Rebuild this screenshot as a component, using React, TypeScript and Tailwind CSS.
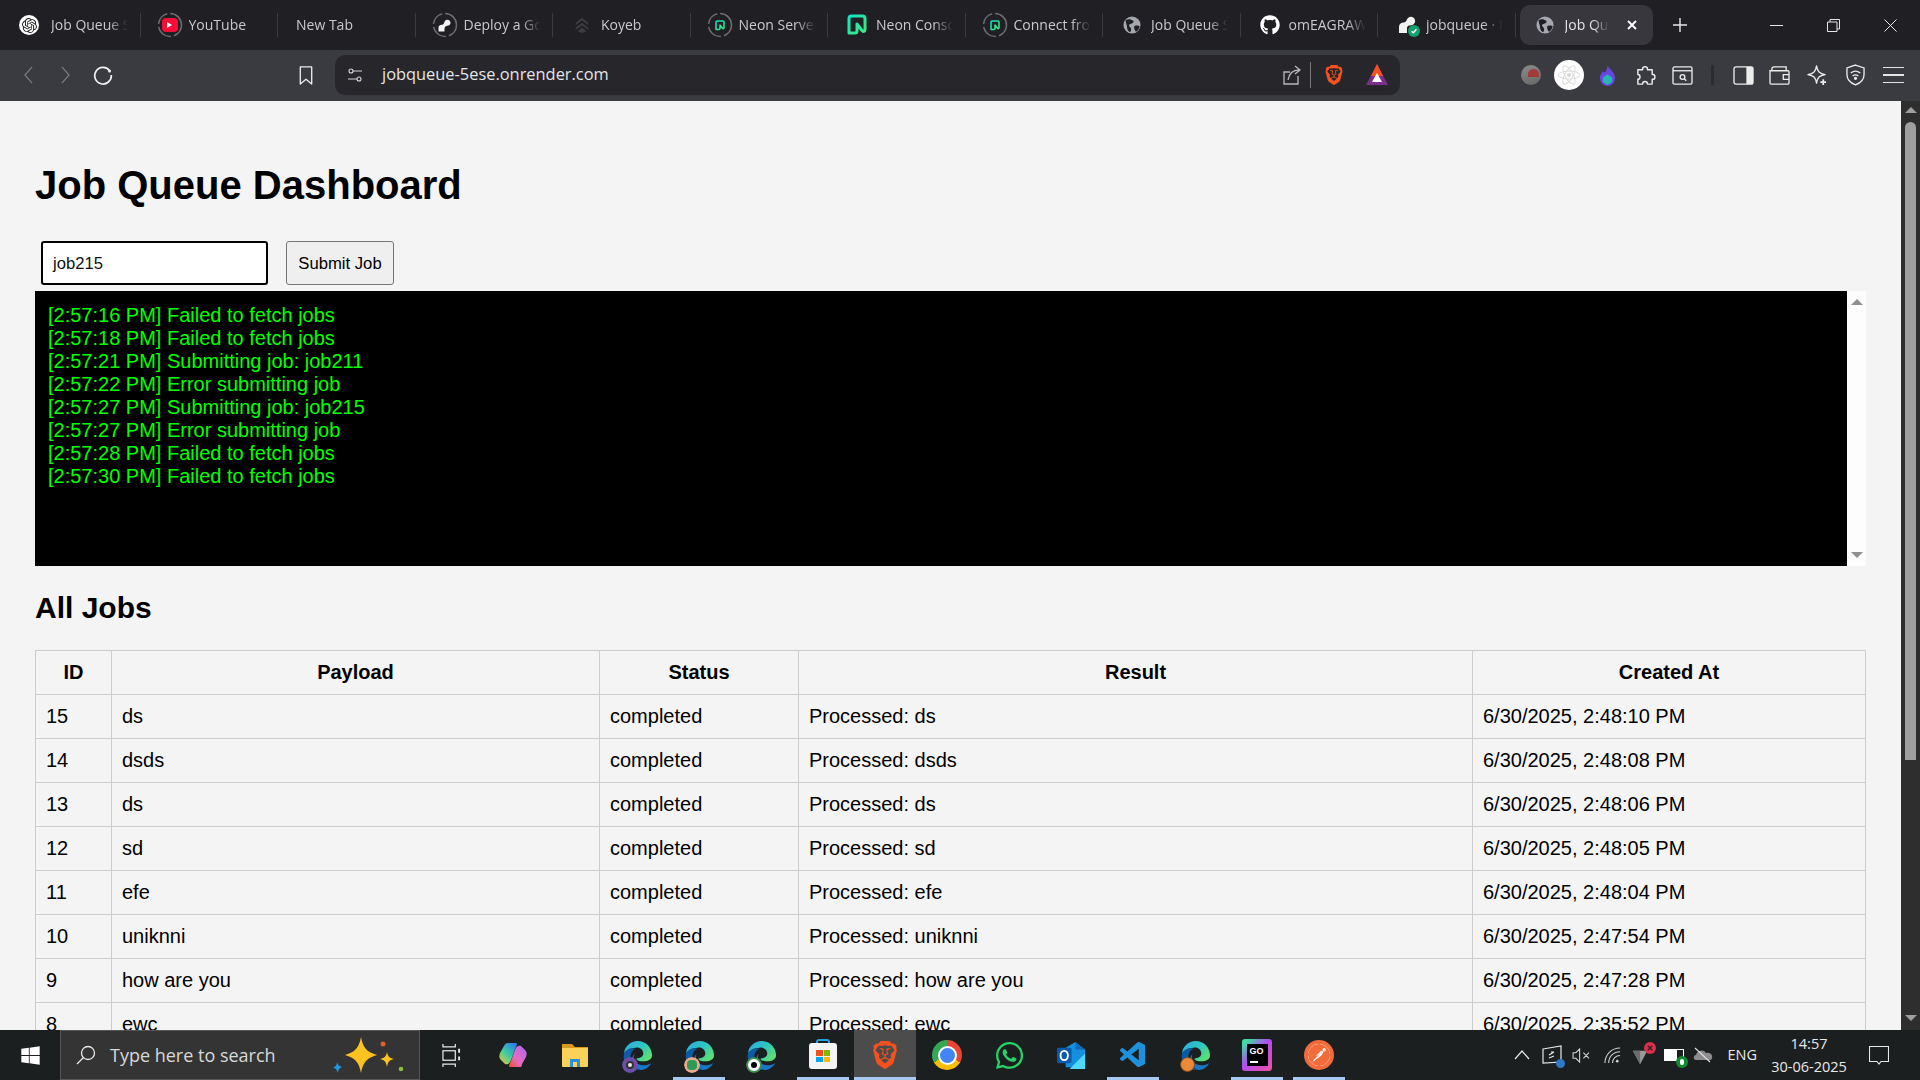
import type { ReactNode } from "react";
import { FaGithub, FaReact, FaWhatsapp, FaWindows } from "react-icons/fa";
import { SiBrave, SiOpenai, SiPostman } from "react-icons/si";
import { VscVscode } from "react-icons/vsc";

const UI_FONT = "font-['Open_Sans','Noto_Sans',sans-serif]";

/* Dashed ring browsers show round a favicon while loading */
function LoadingRing({ children }: { children: ReactNode }) {
  return (
    <div className="relative w-[26px] h-[26px] flex items-center justify-center">
      <svg viewBox="0 0 26 26" className="absolute inset-0 w-[26px] h-[26px]" fill="none">
        <circle cx="13" cy="13" r="11.5" stroke="#6b6b70" strokeWidth="1.6" strokeDasharray="14 3 17 3 14 3 19 3" />
      </svg>
      {children}
    </div>
  );
}

function NeonMark({ size = 14 }: { size?: number }) {
  return (
    <svg viewBox="0 0 20 22" width={size} height={size * 1.1} fill="none">
      <defs>
        <linearGradient id="neon" x1="0" y1="0" x2="1" y2="1">
          <stop offset="0" stopColor="#12e5c4" />
          <stop offset="1" stopColor="#3dea7c" />
        </linearGradient>
      </defs>
      <path d="M2 19V4.5A2.5 2.5 0 0 1 4.500 2H15.500A2.500 2.500 0 0 1 18 4.500V15.500C18 17.500 16 18 15 16.500L10 10V17A2 2 0 0 1 8 19H2Z" stroke="url(#neon)" strokeWidth="3" strokeLinejoin="round" />
    </svg>
  );
}

function Globe() {
  return (
    <svg viewBox="0 0 20 20" className="w-[18px] h-[18px]">
      <circle cx="10" cy="10" r="9.500" fill="#a4a8ae" />
      <path d="M3 4.500C6 3 9 3.500 11.500 5.500C12.500 6.500 11 8 9 8.500C6.500 9 6 10.500 7.500 12C9.500 13.500 9.500 16 8 18C6 17.500 4.500 15 4.500 12.500C4.500 9.500 2.500 7 3 4.500Z" fill="#202024" />
      <path d="M13 11C15 10 17.500 10.500 18.500 11.500C18 14 16.500 16.500 14.500 17.500C13 16 11.500 12 13 11Z" fill="#202024" />
    </svg>
  );
}

function RenderMark({ check }: { check?: boolean }) {
  return (
    <div className="relative w-[20px] h-[20px]">
      <svg viewBox="0 0 20 20" className="w-[20px] h-[20px]">
        <path d="M2 18V12C2 9 4 7.500 6.500 7.500C9 7.500 9.500 5 10 4.500C11 2.500 13 1.500 15 2C17.500 2.500 18.500 5 18 7C17.500 9.500 15 10.500 12.500 10.500C10.500 10.500 10 12 10 13V18Z" fill="#f2f2f2" />
      </svg>
      {check && (
        <div className="absolute right-[-3px] bottom-[-2px] w-[12px] h-[12px] rounded-full bg-[#12a06e] flex items-center justify-center">
          <svg viewBox="0 0 10 10" className="w-[8px] h-[8px]" fill="none" stroke="#fff" strokeWidth="1.800">
            <path d="M2 5.200L4.200 7.200L8 2.800" />
          </svg>
        </div>
      )}
    </div>
  );
}

const tabs: { title: string; icon: ReactNode }[] = [
  {
    title: "Job Queue Status",
    icon: (
      <div className="w-[20px] h-[20px] mr-[6px] rounded-full bg-white flex items-center justify-center">
        <SiOpenai className="w-[15px] h-[15px] text-[#222]" />
      </div>
    ),
  },
  {
    title: "YouTube",
    icon: (
      <LoadingRing>
        <div className="w-[16px] h-[14px] rounded-[4px] bg-[#f50f38] flex items-center justify-center">
          <div className="w-0 h-0 border-y-[3px] border-y-transparent border-l-[5px] border-l-white" />
        </div>
      </LoadingRing>
    ),
  },
  { title: "New Tab", icon: null },
  {
    title: "Deploy a Go service",
    icon: (
      <LoadingRing>
        <svg viewBox="0 0 20 20" className="w-[15px] h-[15px]">
          <path d="M2 18V13C2 10 4 9 6.500 9C9 9 9.500 6 10.500 4C12 2 15 1.500 17 3.500C19 6 18 9 15.500 10C13 10.500 10 11 10 14V18Z" fill="#f2f2f2" />
        </svg>
      </LoadingRing>
    ),
  },
  {
    title: "Koyeb",
    icon: (
      <svg viewBox="0 0 20 20" className="w-[18px] h-[18px]" fill="#3c3c40">
        <path d="M10 2L17 7.500V10L10 5L3 10V7.500ZM10 7.500L17 13V15.500L10 10.500L3 15.500V13ZM10 13L15 17L10 19L5 17Z" />
      </svg>
    ),
  },
  { title: "Neon Serverless", icon: <LoadingRing><NeonMark size={10} /></LoadingRing> },
  { title: "Neon Console", icon: <NeonMark size={20} /> },
  { title: "Connect from any", icon: <LoadingRing><NeonMark size={10} /></LoadingRing> },
  { title: "Job Queue Status", icon: <Globe /> },
  { title: "omEAGRAWAL/job", icon: <FaGithub className="w-[20px] h-[20px] text-white" /> },
  { title: "jobqueue · Render", icon: <RenderMark check /> },
];

const logs = [
  "[2:57:16 PM] Failed to fetch jobs",
  "[2:57:18 PM] Failed to fetch jobs",
  "[2:57:21 PM] Submitting job: job211",
  "[2:57:22 PM] Error submitting job",
  "[2:57:27 PM] Submitting job: job215",
  "[2:57:27 PM] Error submitting job",
  "[2:57:28 PM] Failed to fetch jobs",
  "[2:57:30 PM] Failed to fetch jobs",
];

const jobs = [
  [15, "ds", "6/30/2025, 2:48:10 PM"],
  [14, "dsds", "6/30/2025, 2:48:08 PM"],
  [13, "ds", "6/30/2025, 2:48:06 PM"],
  [12, "sd", "6/30/2025, 2:48:05 PM"],
  [11, "efe", "6/30/2025, 2:48:04 PM"],
  [10, "uniknni", "6/30/2025, 2:47:54 PM"],
  [9, "how are you", "6/30/2025, 2:47:28 PM"],
  [8, "ewc", "6/30/2025, 2:35:52 PM"],
  [7, "test", "6/30/2025, 2:35:40 PM"],
];

function TabStrip() {
  return (
    <div className={`h-[50px] bg-[#1f1f24] flex items-center pl-[3px] ${UI_FONT}`}>
      {tabs.map((tab, i) => (
        <div key={i} className="w-[137.5px] h-[24px] flex items-center relative border-r border-[#3a3a40] last:border-r-0">
          {tab.icon ? (
            <div className="w-[48px] flex-shrink-0 flex justify-center pl-[10px]">{tab.icon}</div>
          ) : (
            <div className="w-[18px] flex-shrink-0" />
          )}
          <span className="block w-[80px] pb-[2px] overflow-hidden whitespace-nowrap text-[14px] text-[#c9c9cd] [mask-image:linear-gradient(to_right,black_72%,transparent_96%)]">
            {tab.title}
          </span>
        </div>
      ))}
      <div className="ml-[4px] w-[133px] h-[40px] rounded-[10px] bg-[#37373d] flex items-center flex-shrink-0">
        <div className="w-[45px] flex justify-center pl-[5px]"><Globe /></div>
        <span className="block w-[46px] pb-[2px] overflow-hidden whitespace-nowrap text-[14px] text-[#e4e4e6] [mask-image:linear-gradient(to_right,black_60%,transparent_96%)]">
          Job Queue
        </span>
        <svg viewBox="0 0 10 10" className="w-[10px] h-[10px] ml-[16px]" stroke="#fff" strokeWidth="1.800">
          <path d="M1 1L9 9M9 1L1 9" />
        </svg>
      </div>
      <svg viewBox="0 0 14 14" className="w-[14px] h-[14px] ml-[20px]" stroke="#e8e8e8" strokeWidth="1.400">
        <path d="M7 0V14M0 7H14" />
      </svg>
      <div className="flex-1" />
      <div className="flex items-center">
        <div className="w-[56px] flex justify-center"><div className="w-[13px] h-px bg-[#e6e6e6]" /></div>
        <div className="w-[58px] flex justify-center">
          <svg viewBox="0 0 13 13" className="w-[13px] h-[13px]" fill="none" stroke="#e6e6e6">
            <path d="M0.500 3H10V12.500H0.500ZM3 3V0.500H12.500V10H10" />
          </svg>
        </div>
        <div className="w-[58px] pr-[2px] flex justify-center">
          <svg viewBox="0 0 13 13" className="w-[13px] h-[13px]" stroke="#e6e6e6">
            <path d="M0.500 0.500L12.500 12.500M12.500 0.500L0.500 12.500" />
          </svg>
        </div>
      </div>
    </div>
  );
}

function ToolIcon({ children, w }: { children: ReactNode; w: string }) {
  return <div className={`${w} flex justify-center items-center`}>{children}</div>;
}

function Toolbar() {
  return (
    <div className={`h-[51px] pb-px bg-[#3a3a41] flex items-center ${UI_FONT}`}>
      <div className="w-[335px] flex items-center flex-shrink-0">
        <ToolIcon w="w-[28px] ml-[14px]">
          <svg viewBox="0 0 12 20" className="w-[11px] h-[18px]" fill="none" stroke="#7c7c82" strokeWidth="1.300"><path d="M10 1L2 10L10 19" /></svg>
        </ToolIcon>
        <ToolIcon w="w-[28px] ml-[9px]">
          <svg viewBox="0 0 12 20" className="w-[11px] h-[18px]" fill="none" stroke="#7c7c82" strokeWidth="1.300"><path d="M2 1L10 10L2 19" /></svg>
        </ToolIcon>
        <ToolIcon w="w-[28px] ml-[10px]">
          <svg viewBox="0 0 20 20" className="w-[20px] h-[20px]" fill="none" stroke="#f0f0f0" strokeWidth="1.700"><path d="M16.500 5.500A8.300 8.300 0 1 0 18.300 10" /><circle cx="16.500" cy="6" r="1.500" fill="#f0f0f0" stroke="none" /></svg>
        </ToolIcon>
        <div className="flex-1" />
        <svg viewBox="0 0 14 20" className="w-[14px] h-[19px] mr-[22px]" fill="none" stroke="#ececec" strokeWidth="1.400"><path d="M1 1H13V19L7 14L1 19Z" strokeLinejoin="round" /></svg>
      </div>
      <div className="w-[1065px] h-[40px] rounded-[10px] bg-[#26262b] flex items-center flex-shrink-0">
        <svg viewBox="0 0 16 16" className="w-[16px] h-[16px] ml-[12px]" fill="none" stroke="#d8d8d8" strokeWidth="1.100">
          <circle cx="4" cy="4" r="2" /><path d="M6 4H15M1 12H10" /><circle cx="12" cy="12" r="2" />
        </svg>
        <span className="ml-[19px] pb-[1px] text-[16.4px] text-[#e4e4e8]">jobqueue-5ese.onrender.com</span>
        <div className="flex-1" />
        <svg viewBox="0 0 20 24" className="w-[20px] h-[24px]" fill="none" stroke="#b9b9bd" strokeWidth="1.300">
          <path d="M16 13V21H2V9H8M6 17C7 11 10 7 17 7M13 3L18 7L13 11" />
        </svg>
        <div className="w-px h-[26px] bg-[#77777c] ml-[8px]" />
        <SiBrave className="w-[20px] h-[24px] ml-[13px] text-[#f4511e]" />
        <svg viewBox="0 0 24 24" className="w-[24px] h-[24px] ml-[21px] mr-[11px]">
          <path d="M12 1L23 22H1Z" fill="#7b2d8b" />
          <path d="M12 1L18 13H6Z" fill="#f4511e" />
          <path d="M12 10L17 19H7Z" fill="#fff" />
        </svg>
      </div>
      <div className="flex-1 flex items-center pl-[112px]">
        <ToolIcon w="w-[38px]">
          <div className="w-[20px] h-[20px] rounded-full bg-[linear-gradient(160deg,#8c8c8c,#666)] flex items-start justify-center overflow-hidden">
            <div className="w-[11px] h-[8px] mt-[4px] ml-[4px] rounded-t-full bg-[#a33a3a]" />
          </div>
        </ToolIcon>
        <ToolIcon w="w-[38px]">
          <div className="w-[30px] h-[30px] rounded-full bg-white flex items-center justify-center">
            <FaReact className="w-[22px] h-[22px] text-[#d8d8d8]" />
          </div>
        </ToolIcon>
        <ToolIcon w="w-[38px]">
          <svg viewBox="0 0 18 22" className="w-[17px] h-[21px]">
            <path d="M9 0C10 4 17 7 17 14A8 8 0 0 1 1 14C1 10 3 9 4 6C5 8 6 8 7 7C8 5 9 3 9 0Z" fill="#6a45e0" />
            <path d="M9 10L14 13V18L9 21L4 18V13Z" fill="#25b8b0" />
          </svg>
        </ToolIcon>
        <ToolIcon w="w-[38px]">
          <svg viewBox="0 0 22 22" className="w-[21px] h-[21px]" fill="none" stroke="#ececec" strokeWidth="1.500" strokeLinejoin="round">
            <path d="M8 4C8 1 13 1 13 4V5H18V10H19C21.500 10 21.500 15 19 15H18V20H13C13 16.500 8 16.500 8 20H3V15C6 15 6 10 3 10V5H8Z" />
          </svg>
        </ToolIcon>
        <ToolIcon w="w-[36px]">
          <svg viewBox="0 0 22 20" className="w-[21px] h-[19px]" fill="none" stroke="#ececec" strokeWidth="1.400">
            <rect x="1" y="1" width="20" height="18" rx="1.500" /><path d="M1 5H21" /><circle cx="11" cy="11.500" r="2.500" /><path d="M13 13.500L15 15.500" />
          </svg>
        </ToolIcon>
        <div className="w-[3px] h-[20px] bg-[#2c2c30] ml-[11px] mr-[14px]" />
        <ToolIcon w="w-[30px]">
          <svg viewBox="0 0 22 20" className="w-[21px] h-[19px]">
            <rect x="1" y="1" width="20" height="18" rx="2" fill="none" stroke="#ececec" strokeWidth="1.400" />
            <rect x="14" y="1" width="7" height="18" fill="#ececec" />
          </svg>
        </ToolIcon>
        <ToolIcon w="w-[38px] ml-[2px]">
          <svg viewBox="0 0 22 20" className="w-[21px] h-[19px]" fill="none" stroke="#ececec" strokeWidth="1.400">
            <path d="M3 5V3C3 2 4 1 5 1H18V5M1 5H20C20.500 5 21 5.500 21 6V18C21 18.500 20.500 19 20 19H2C1.500 19 1 18.500 1 18ZM21 9H15V14H21" />
          </svg>
        </ToolIcon>
        <ToolIcon w="w-[38px]">
          <svg viewBox="0 0 22 22" className="w-[21px] h-[21px]" fill="none" stroke="#ececec" strokeWidth="1.400">
            <path d="M10 1C11 7 13 9 19 10C13 11 11 13 10 19C9 13 7 11 1 10C7 9 9 7 10 1Z" strokeLinejoin="round" /><path d="M17 15V21M14 18H20" strokeWidth="1.800" />
          </svg>
        </ToolIcon>
        <ToolIcon w="w-[38px]">
          <svg viewBox="0 0 20 23" className="w-[19px] h-[22px]" fill="none" stroke="#ececec" strokeWidth="1.400">
            <path d="M10 1L19 4V11C19 16 15 20 10 22C5 20 1 16 1 11V4Z" /><path d="M5 9.500C8 7 12 7 15 9.500M7 12.500C9 11 11 11 13 12.500" /><circle cx="10" cy="15" r="1" fill="#ececec" />
          </svg>
        </ToolIcon>
        <ToolIcon w="w-[38px]">
          <div className="w-[21px] flex flex-col gap-[6px]">
            <div className="h-[1.500px] bg-[#e4e4e4]" />
            <div className="h-[1.500px] bg-[#e4e4e4]" />
            <div className="h-[1.500px] bg-[#e4e4e4]" />
          </div>
        </ToolIcon>
      </div>
    </div>
  );
}

function ArrowUp({ color = "#8f8f8f" }: { color?: string }) {
  return <div className="w-0 h-0 border-x-[6.500px] border-x-transparent border-b-[6px]" style={{ borderBottomColor: color }} />;
}

function ArrowDown({ color = "#8f8f8f" }: { color?: string }) {
  return <div className="w-0 h-0 border-x-[6.500px] border-x-transparent border-t-[6px]" style={{ borderTopColor: color }} />;
}

function Dashboard() {
  return (
    <div className="flex-1 min-w-0 overflow-hidden pl-[35px] pr-[35px] font-['Liberation_Sans',Arial,sans-serif] text-black">
      <h1 className="mt-[61px] mb-[33px] text-[40px] leading-[46px] font-bold">Job Queue Dashboard</h1>
      <div className="flex items-stretch ml-[6px] h-[44px]">
        <div className="w-[227px] border-2 border-black rounded-[3px] bg-white flex items-center pl-[10px] text-[16.67px] text-[#111]">
          job215
        </div>
        <button className="ml-[18px] w-[108px] border border-[#767676] rounded-[3px] bg-[#efefef] text-[16.67px] text-black">
          Submit Job
        </button>
      </div>
      <div className="mt-[6px] h-[275px] flex">
        <div className="flex-1 bg-black pl-[13px] pt-[13px] text-[20px] leading-[23px] text-[#00ff00]">
          {logs.map((line, i) => (
            <div key={i}>{line}</div>
          ))}
        </div>
        <div className="w-[19px] bg-[#fdfdfd] flex flex-col items-center justify-between pt-[8px] pb-[8px]">
          <ArrowUp />
          <ArrowDown />
        </div>
      </div>
      <h2 className="mt-[25px] mb-[25px] text-[30px] leading-[34px] font-bold">All Jobs</h2>
      <table className="w-full border-collapse table-fixed text-[20px] leading-[23px]">
        <colgroup>
          <col className="w-[76px]" />
          <col className="w-[488px]" />
          <col className="w-[199px]" />
          <col className="w-[674px]" />
          <col />
        </colgroup>
        <thead>
          <tr className="h-[44px]">
            {["ID", "Payload", "Status", "Result", "Created At"].map((h) => (
              <th key={h} className="border border-[#cccccc] px-[10px] font-bold text-center">{h}</th>
            ))}
          </tr>
        </thead>
        <tbody>
          {jobs.map(([id, payload, created]) => (
            <tr key={id} className="h-[44px]">
              <td className="border border-[#cccccc] px-[10px]">{id}</td>
              <td className="border border-[#cccccc] px-[10px]">{payload}</td>
              <td className="border border-[#cccccc] px-[10px]">completed</td>
              <td className="border border-[#cccccc] px-[10px]">Processed: {payload}</td>
              <td className="border border-[#cccccc] px-[10px]">{created}</td>
            </tr>
          ))}
        </tbody>
      </table>
    </div>
  );
}

function PageScrollbar() {
  return (
    <div className="w-[19px] flex-shrink-0 bg-[#2e2e2e] flex flex-col items-center pt-[6px] pb-[9px]">
      <ArrowUp color="#9e9e9e" />
      <div className="w-[11px] h-[638px] mt-[9px] rounded-t-[6px] bg-[#a0a0a0]" />
      <div className="flex-1" />
      <ArrowDown color="#9e9e9e" />
    </div>
  );
}

function EdgeIcon({ badge }: { badge?: ReactNode }) {
  return (
    <div className="relative w-[31px] h-[31px]">
      <svg viewBox="0 0 32 32" className="w-[31px] h-[31px]">
        <defs>
          <linearGradient id="edgeA" x1="0" y1="0" x2="1" y2="0.700">
            <stop offset="0" stopColor="#2aa8e8" />
            <stop offset="0.55" stopColor="#2fc6c0" />
            <stop offset="1" stopColor="#5fe070" />
          </linearGradient>
        </defs>
        <path d="M19 31C24 31 28 28 30 24C27 26 21 27 17 25C13 23 11 19 13 14C9 18 9 28 19 31Z" fill="#1878c8" />
        <path d="M2 14C4 9 10 8 14 9C9 11 8 16 9 21C10 26 14 30 19 31C9 32 0 25 2 14Z" fill="#0c5aa8" />
        <path d="M2 14C3 6 9 1 16 1C25 1 31 8 31 16C31 20 27 22 22 22C18 22 15 21 15 19C19 19 22 17 22 14C22 10 18 7 14 8C8 8 3 11 2 14Z" fill="url(#edgeA)" />
      </svg>
      {badge && (
        <div className="absolute left-0 bottom-[-2px] w-[16px] h-[16px] rounded-full overflow-hidden flex items-center justify-center">
          {badge}
        </div>
      )}
    </div>
  );
}

const taskIcons: { icon: ReactNode; open?: boolean; active?: boolean }[] = [
  {
    icon: (
      <svg viewBox="0 0 28 26" className="w-[28px] h-[26px]">
        <defs>
          <linearGradient id="copilotA" x1="0" y1="1" x2="0.800" y2="0">
            <stop offset="0" stopColor="#f7c62f" />
            <stop offset="0.5" stopColor="#3fcfa0" />
            <stop offset="1" stopColor="#2a7ff0" />
          </linearGradient>
          <linearGradient id="copilotB" x1="1" y1="0" x2="0" y2="1">
            <stop offset="0" stopColor="#a868f0" />
            <stop offset="0.6" stopColor="#e86ac0" />
            <stop offset="1" stopColor="#f0502a" />
          </linearGradient>
        </defs>
        <path d="M22 25H12C9 25 10 23 11.500 20L16 8C17 5 19 3 22 4L26 8C28 10 28 12 27 15L23 22C22.500 24 22.500 25 22 25Z" fill="url(#copilotB)" />
        <path d="M9 1H16C19 1 18 3 16.500 6L12 18C11 21 9 23 6 22L2 18C0 16 0 14 1 11L5 4C6 2 7 1 9 1Z" fill="url(#copilotA)" />
      </svg>
    ),
  },
  {
    icon: (
      <svg viewBox="0 0 28 28" className="w-[28px] h-[28px]">
        <path d="M1 3H11L14 6H27V10H1Z" fill="#d89a1d" />
        <rect x="1" y="7" width="26" height="19" rx="1" fill="#fbd258" />
        <path d="M9 26V18H19V26H16V21H12V26Z" fill="#2a8fdc" />
      </svg>
    ),
  },
  {
    icon: (
      <EdgeIcon
        badge={
          <div className="w-[16px] h-[16px] rounded-full bg-[#6b4fa8] flex items-center justify-center">
            <div className="w-[8px] h-[8px] rounded-full bg-[#e8e8e8] border-2 border-[#333]" />
          </div>
        }
      />
    ),
  },
  {
    open: true,
    icon: (
      <EdgeIcon
        badge={
          <div className="w-[16px] h-[16px] rounded-full bg-[#e9a98c] flex items-center justify-center">
            <div className="w-[10px] h-[10px] rounded-[4px] bg-[#2f9a55]" />
          </div>
        }
      />
    ),
  },
  {
    icon: (
      <EdgeIcon
        badge={
          <div className="w-[16px] h-[16px] rounded-full bg-white border-2 border-[#3f8f50] flex items-center justify-center">
            <div className="w-[6px] h-[6px] rounded-full bg-black" />
          </div>
        }
      />
    ),
  },
  {
    open: true,
    icon: (
      <div className="relative w-[30px] h-[32px] flex justify-center">
        <div className="absolute top-0 w-[14px] h-[8px] rounded-t-[3px] border-2 border-b-0 border-[#26a0e0]" />
        <div className="absolute top-[4px] w-[28px] h-[26px] rounded-[3px] bg-[#f4f4f4] grid grid-cols-2 gap-px p-[7px]">
          <div className="bg-[#f25022]" />
          <div className="bg-[#7fba00]" />
          <div className="bg-[#00a4ef]" />
          <div className="bg-[#ffb900]" />
        </div>
      </div>
    ),
  },
  { open: true, active: true, icon: <SiBrave className="w-[28px] h-[32px] text-[#f4511e]" /> },
  {
    icon: (
      <div className="w-[30px] h-[30px] rounded-full bg-[conic-gradient(#ea4335_0deg_120deg,#fbbc05_120deg_240deg,#34a853_240deg_360deg)] flex items-center justify-center">
        <div className="w-[15px] h-[15px] rounded-full bg-[#4285f4] border-2 border-white box-content" />
      </div>
    ),
  },
  { icon: <FaWhatsapp className="w-[31px] h-[31px] text-[#25d366]" /> },
  {
    icon: (
      <svg viewBox="0 0 32 32" className="w-[31px] h-[31px]">
        <path d="M10 8L20 2L30 10V28H10Z" fill="#1490df" />
        <path d="M20 2L30 10H20Z" fill="#0f6cbd" />
        <path d="M14 30H30V14Z" fill="#50d9ff" />
        <rect x="1" y="8" width="15" height="16" rx="1.500" fill="#0a5aa8" />
        <ellipse cx="8.500" cy="16" rx="3.800" ry="4.800" fill="none" stroke="#fff" strokeWidth="2" />
      </svg>
    ),
  },
  { open: true, icon: <VscVscode className="w-[31px] h-[31px] text-[#1e90dc]" /> },
  { icon: <EdgeIcon badge={<div className="w-[15px] h-[15px] rounded-full bg-[#e88a3a] border border-[#7a4a20]" />} /> },
  {
    open: true,
    icon: (
      <div className="relative w-[30px] h-[32px] rounded-[3px] bg-[linear-gradient(135deg,#3be0a0_10%,#b04cf0_45%,#f050a0_100%)] flex items-center justify-center">
        <div className="w-[21px] h-[22px] bg-black text-[9px] leading-[10px] font-bold text-white pl-[3px] pt-[2px] font-['Liberation_Sans',sans-serif]">
          GO
          <div className="w-[8px] h-[2px] bg-white mt-[5px]" />
        </div>
      </div>
    ),
  },
  {
    open: true,
    icon: (
      <div className="w-[30px] h-[30px] rounded-full bg-[#f26b3a] flex items-center justify-center">
        <SiPostman className="w-[22px] h-[22px] text-[#f26b3a] bg-white rounded-full" />
      </div>
    ),
  },
];

function Taskbar() {
  return (
    <div className={`h-[50px] bg-[#1c1f20] flex items-stretch ${UI_FONT}`}>
      <div className="w-[60px] flex items-center justify-center flex-shrink-0">
        <FaWindows className="w-[21px] h-[21px] text-white" />
      </div>
      <div className="w-[360px] flex items-center bg-[#343434] border border-[#565656] flex-shrink-0">
        <svg viewBox="0 0 20 20" className="w-[20px] h-[20px] ml-[15px]" fill="none" stroke="#e8e8e8" strokeWidth="1.300">
          <circle cx="12" cy="8" r="6.500" /><path d="M7.500 12.500L1 19" />
        </svg>
        <span className="ml-[14px] text-[18px] text-[#d8d8d8]">Type here to search</span>
        <div className="flex-1" />
        <svg viewBox="0 0 76 40" className="w-[76px] h-[40px] mr-[12px]">
          <path d="M30 2C32 13 36 17 46 20C36 23 32 27 30 38C28 27 24 23 14 20C24 17 28 13 30 2Z" fill="#fdc21f" />
          <path d="M56 17C57 21 58 23 63 24C58 25 57 27 56 32C55 27 54 25 49 24C54 23 55 21 56 17Z" fill="#fdc21f" />
          <circle cx="52" cy="9" r="2.500" fill="#d9622a" />
          <circle cx="70" cy="34" r="2.300" fill="#8dbb3a" />
          <path d="M6 27C7 30 8 31 11 32C8 33 7 35 7 38C6 35 5 33 2 33C5 31 6 30 6 27Z" fill="#1e9be8" />
        </svg>
      </div>
      <div className="w-[62px] flex items-center justify-center flex-shrink-0">
        <svg viewBox="0 0 20 26" className="w-[19px] h-[25px]" fill="none" stroke="#e8e8e8" strokeWidth="1.300">
          <path d="M1 1V4H14V1M1 25V22H14V25" /><rect x="1" y="8" width="13" height="10" /><path d="M18 6V10M18 14V18" strokeWidth="2" />
        </svg>
      </div>
      {taskIcons.map((t, i) => (
        <div key={i} className={`w-[62px] relative flex items-center justify-center flex-shrink-0 ${t.active ? "bg-[#4c4c4c]" : ""}`}>
          {t.icon}
          {t.open && <div className={`absolute bottom-0 h-[3px] bg-[#a8c9f2] ${t.active ? "left-0 right-0" : "left-[5px] right-[5px]"}`} />}
        </div>
      ))}
      <div className="flex-1" />
      <div className="flex items-center text-white flex-shrink-0">
        <svg viewBox="0 0 16 10" className="w-[16px] h-[10px]" fill="none" stroke="#e6e6e6" strokeWidth="1.200"><path d="M1 9L8 1L15 9" /></svg>
        <div className="relative ml-[12px] w-[20px] h-[20px]">
          <svg viewBox="0 0 20 20" className="w-[20px] h-[20px]" fill="none" stroke="#e6e6e6" strokeWidth="1.200">
            <path d="M1 4L19 1V17L1 18ZM7 10L12 7M12 7H9M7 13L12 11" />
          </svg>
          <div className="absolute right-[-3px] bottom-[-3px] w-[9px] h-[9px] rounded-full bg-[#2e78c8]" />
        </div>
        <svg viewBox="0 0 20 16" className="w-[19px] h-[15px] ml-[10px]" fill="none" stroke="#d6d6d6" strokeWidth="1.100"><path d="M1 5H4L8 1V15L4 11H1ZM12 5L18 11M18 5L12 11" /></svg>
        <svg viewBox="0 0 18 18" className="w-[17px] h-[17px] ml-[13px]" fill="none" stroke="#d0d0d0" strokeWidth="1.100"><path d="M1 17C1 8 8 1 17 1M5 17C5 10 10 5 17 5M9 17C9 12.500 12.500 9 17 9" /><circle cx="14" cy="15" r="1.400" fill="#d0d0d0" stroke="none" /></svg>
        <div className="relative ml-[11px] w-[20px] h-[20px]">
          <svg viewBox="0 0 20 20" className="w-[18px] h-[18px] mt-[3px]"><path d="M1 3H17L9 18Z" fill="#9a9a9a" /><path d="M1 3H9V18Z" fill="#6c6c6c" /></svg>
          <div className="absolute right-[-4px] top-[-3px] w-[12px] h-[12px] rounded-full bg-[#d9304f] flex items-center justify-center">
            <svg viewBox="0 0 8 8" className="w-[6px] h-[6px]" stroke="#222" strokeWidth="1.500"><path d="M1 1L7 7M7 1L1 7" /></svg>
          </div>
        </div>
        <div className="relative ml-[12px] w-[20px] h-[12px] border border-white">
          <div className="w-[12px] h-full bg-white" />
          <div className="absolute right-[-5px] bottom-[-8px] w-[12px] h-[12px] rounded-full bg-[#0f8a2f] flex items-center justify-center z-10">
            <div className="w-[4px] h-[6px] rounded-full bg-white" />
          </div>
        </div>
        <svg viewBox="0 0 20 16" className="w-[20px] h-[16px] ml-[9px]"><path d="M3 13C0 13 0 8 3 8C4 3 11 2 13 6C17 5 20 8 19 11C19 13 17 13 16 13Z" fill="#8c8c8c" /><path d="M2 1L17 15" stroke="#ddd" strokeWidth="1.200" /></svg>
        <span className="ml-[14px] text-[14.500px] text-[#e8e8e8]">ENG</span>
        <div className="ml-[12px] w-[80px] flex flex-col items-center text-[14.500px] leading-[23px] text-[#e8e8e8]">
          <span>14:57</span>
          <span>30-06-2025</span>
        </div>
        <div className="ml-[20px] mr-[31px]">
          <svg viewBox="0 0 20 19" className="w-[20px] h-[19px]" fill="none" stroke="#e8e8e8" strokeWidth="1.100"><path d="M0.500 0.500H19.500V15.500H12L10 18L8 15.500H0.500Z" /></svg>
        </div>
      </div>
    </div>
  );
}

export default function App() {
  return (
    <div className="w-[1920px] h-[1080px] flex flex-col overflow-hidden bg-[#f4f4f4]">
      <TabStrip />
      <Toolbar />
      <div className="flex-1 min-h-0 flex">
        <Dashboard />
        <PageScrollbar />
      </div>
      <Taskbar />
    </div>
  );
}
